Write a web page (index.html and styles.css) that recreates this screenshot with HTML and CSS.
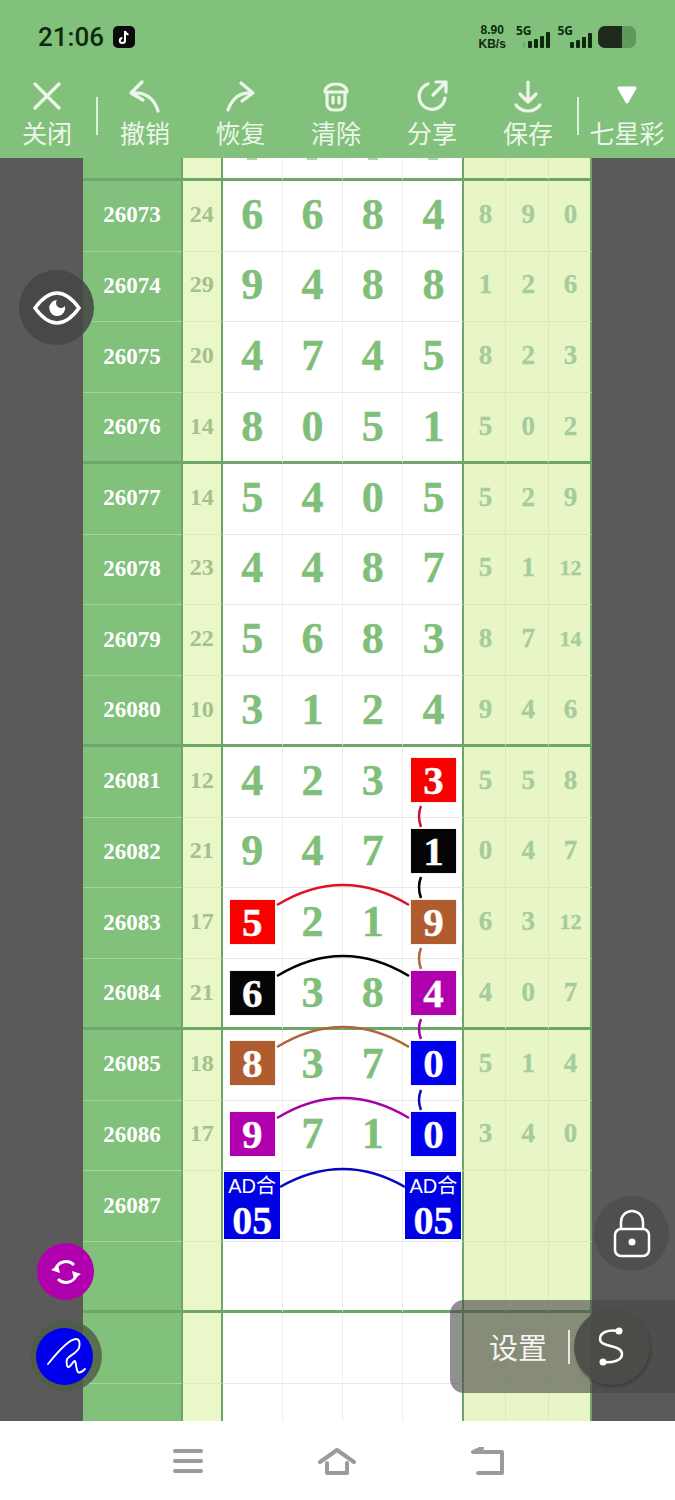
FILE: index.html
```html
<!DOCTYPE html>
<html lang="zh">
<head>
    <meta charset="UTF-8">
    <meta name="viewport" content="width=device-width, initial-scale=1.0">
    <title>七星彩</title>
    <link rel="stylesheet" href="styles.css">
</head>
<body>
<div class="phone">
    <header class="top">
        <div class="status">
            <span class="time">21:06</span>
            <svg class="tiktok" width="22" height="24" viewBox="0 0 22 24"><rect x="0" y="1" width="22" height="22" rx="5" fill="#0a0a0a"/><path d="M12 6v9.500a2.600 2.600 0 1 1-2.600-2.600M12 6c.3 2 1.500 3.200 3.500 3.500" fill="none" stroke="#fff" stroke-width="2"/></svg>
            <span class="speed">8.90<br>KB/s</span>
            <span class="sig sig-one">5G
                <svg width="28" height="18" viewBox="0 0 28 18"><rect x="0" y="11" width="2" height="6" fill="#7aa873"/><rect x="5" y="10" width="4" height="7" rx="1"/><rect x="11" y="8" width="4" height="9" rx="1"/><rect x="17" y="5" width="4" height="12" rx="1"/><rect x="23" y="1" width="4" height="16" rx="1"/></svg>
            </span>
            <span class="sig sig-two">5G
                <svg width="24" height="18" viewBox="0 0 24 18"><rect x="0" y="11" width="4" height="6" rx="1"/><rect x="6" y="9" width="4" height="8" rx="1"/><rect x="12" y="6" width="4" height="11" rx="1"/><rect x="18" y="2" width="4" height="15" rx="1"/></svg>
            </span>
            <svg class="battery" width="40" height="24" viewBox="0 0 40 24"><rect x="0" y="1" width="38" height="22" rx="7" fill="#5f9a5a"/><path d="M7 1h17v22H7a7 7 0 0 1-7-7V8a7 7 0 0 1 7-7z" fill="#1d2a1d"/></svg>
        </div>
        <nav class="tools">
            <div class="tool">
                <svg width="36" height="36" viewBox="0 0 36 36"><path d="M6 6l24 24M30 6L6 30"/></svg>
                <span>关闭</span>
            </div>
            <i class="tool-sep"></i>
            <div class="tool">
                <svg width="36" height="36" viewBox="0 0 36 36"><path d="M15 4L4 15l12 7M5 15c13-1 22 5 26 18"/></svg>
                <span>撤销</span>
            </div>
            <div class="tool">
                <svg width="36" height="36" viewBox="0 0 36 36"><path d="M18 5l12 10-11 8M29 15C17 14 9 21 5 32"/></svg>
                <span>恢复</span>
            </div>
            <div class="tool">
                <svg width="36" height="36" viewBox="0 0 36 36"><path d="M9 14h18v12a6 6 0 0 1-6 6h-6a6 6 0 0 1-6-6zM7 14c0-5 5-8 11-8s11 3 11 8M15 19v6M21 19v6"/></svg>
                <span>清除</span>
            </div>
            <div class="tool">
                <svg width="36" height="36" viewBox="0 0 36 36"><path d="M14 6a13 13 0 1 0 17 14M22 4h10v10M32 4L19 17"/></svg>
                <span>分享</span>
            </div>
            <div class="tool">
                <svg width="36" height="36" viewBox="0 0 36 36"><path d="M18 4v20M10 16l8 8 8-8M6 27c3 4 7 6 12 6s9-2 12-6"/></svg>
                <span>保存</span>
            </div>
            <i class="tool-sep"></i>
            <div class="tool">
                <svg width="36" height="36" viewBox="0 0 36 36"><path class="solid" d="M10 10h16l-8 14z"/></svg>
                <span>七星彩</span>
            </div>
        </nav>
    </header>

    <main class="board">
        <div class="sheet">
            <div class="row cut end"><b></b><em></em><u></u><u></u><u></u><u></u><s></s><s></s><s></s></div>

            <div class="row"><b>26073</b><em>24</em><u>6</u><u>6</u><u>8</u><u>4</u><s>8</s><s>9</s><s>0</s></div>
            <div class="row"><b>26074</b><em>29</em><u>9</u><u>4</u><u>8</u><u>8</u><s>1</s><s>2</s><s>6</s></div>
            <div class="row"><b>26075</b><em>20</em><u>4</u><u>7</u><u>4</u><u>5</u><s>8</s><s>2</s><s>3</s></div>
            <div class="row end"><b>26076</b><em>14</em><u>8</u><u>0</u><u>5</u><u>1</u><s>5</s><s>0</s><s>2</s></div>

            <div class="row"><b>26077</b><em>14</em><u>5</u><u>4</u><u>0</u><u>5</u><s>5</s><s>2</s><s>9</s></div>
            <div class="row"><b>26078</b><em>23</em><u>4</u><u>4</u><u>8</u><u>7</u><s>5</s><s>1</s><s class="small">12</s></div>
            <div class="row"><b>26079</b><em>22</em><u>5</u><u>6</u><u>8</u><u>3</u><s>8</s><s>7</s><s class="small">14</s></div>
            <div class="row end"><b>26080</b><em>10</em><u>3</u><u>1</u><u>2</u><u>4</u><s>9</s><s>4</s><s>6</s></div>

            <div class="row"><b>26081</b><em>12</em><u>4</u><u>2</u><u>3</u><u><span class="chip red">3</span></u><s>5</s><s>5</s><s>8</s></div>
            <div class="row"><b>26082</b><em>21</em><u>9</u><u>4</u><u>7</u><u><span class="chip black">1</span></u><s>0</s><s>4</s><s>7</s></div>
            <div class="row"><b>26083</b><em>17</em><u><span class="chip red">5</span></u><u>2</u><u>1</u><u><span class="chip brown">9</span></u><s>6</s><s>3</s><s class="small">12</s></div>
            <div class="row end"><b>26084</b><em>21</em><u><span class="chip black">6</span></u><u>3</u><u>8</u><u><span class="chip purple">4</span></u><s>4</s><s>0</s><s>7</s></div>

            <div class="row"><b>26085</b><em>18</em><u><span class="chip brown">8</span></u><u>3</u><u>7</u><u><span class="chip blue">0</span></u><s>5</s><s>1</s><s>4</s></div>
            <div class="row"><b>26086</b><em>17</em><u><span class="chip purple">9</span></u><u>7</u><u>1</u><u><span class="chip blue">0</span></u><s>3</s><s>4</s><s>0</s></div>
            <div class="row"><b>26087</b><em></em><u><span class="total">AD合<strong>05</strong></span></u><u></u><u></u><u><span class="total">AD合<strong>05</strong></span></u><s></s><s></s><s></s></div>
            <div class="row end"><b></b><em></em><u></u><u></u><u></u><u></u><s></s><s></s><s></s></div>

            <div class="row"><b></b><em></em><u></u><u></u><u></u><u></u><s></s><s></s><s></s></div>
            <div class="row"><b></b><em></em><u></u><u></u><u></u><u></u><s></s><s></s><s></s></div>
        </div>

        <!-- links between matching numbers, coordinates are board pixels -->
        <svg class="links" width="675" height="1263" viewBox="0 0 675 1263">
            <path d="M277 747Q343 707 409 747" stroke="#e0102a"/>
            <path d="M277 818Q343 778 409 818" stroke="#000"/>
            <path d="M277 889Q343 849 409 889" stroke="#b0653a"/>
            <path d="M277 960Q343 920 409 960" stroke="#a800a8"/>
            <path d="M280 1029Q343 993 405 1029" stroke="#0808c0"/>
            <path d="M421 648Q417 658 421 669" stroke="#d0103a"/>
            <path d="M421 719Q417 729 421 740" stroke="#000"/>
            <path d="M421 790Q417 800 421 811" stroke="#b0653a"/>
            <path d="M421 861Q417 871 421 881" stroke="#a800a8"/>
            <path d="M421 932Q417 942 421 952" stroke="#0808c0"/>
        </svg>

        <button class="float eye">
            <svg width="48" height="36" viewBox="0 0 48 36"><path d="M2 18C10 7 17 3 24 3s14 4 22 15c-8 11-15 15-22 15S10 29 2 18z" fill="none" stroke="#fff" stroke-width="3.500"/><path d="M24 10a8 8 0 1 0 8 6 4 4 0 0 1-8-6z" fill="#fff"/></svg>
        </button>
        <button class="float lock">
            <svg width="38" height="50" viewBox="0 0 38 50"><path d="M8 20V13a11 11 0 0 1 22 0v7" fill="none" stroke="#fff" stroke-width="2.500"/><rect x="2" y="20" width="34" height="27" rx="6" fill="none" stroke="#fff" stroke-width="2.500"/><circle cx="19" cy="33" r="3.500" fill="#fff"/></svg>
        </button>
        <button class="float sync">
            <svg width="34" height="34" viewBox="0 0 34 34"><path d="M7 13a11 11 0 0 1 18-3M27 21a11 11 0 0 1-18 3" fill="none" stroke="#fff" stroke-width="3"/><path d="M2 15l7-5 2 8zM32 19l-7 5-2-8z" fill="#fff"/></svg>
        </button>
        <div class="pen-ring">
            <span class="pen">
                <svg width="44" height="44" viewBox="0 0 44 44"><path d="M5 30C13 20 26 5 33 5c4 0 4 5 3 9-2 5-9 7-12 11-1 4 0 9 2 8 2-1 4-6 6-6 1 0 1 9 3 11 1 1 4 0 7-3" fill="none" stroke="#fff" stroke-width="1.900" stroke-linecap="round" stroke-linejoin="round"/></svg>
            </span>
        </div>
        <div class="settings">
            <span class="settings-text">设置</span>
            <i class="settings-sep"></i>
            <span class="s-btn">
                <svg width="40" height="42" viewBox="0 0 40 42"><path d="M27 5C15 3 8 7 8 13c0 9 22 5 22 15 0 7-10 9-19 8" fill="none" stroke="#fff" stroke-width="2.500"/><circle cx="27" cy="5" r="3.500" fill="#fff"/><circle cx="11" cy="36" r="3.500" fill="#fff"/></svg>
            </span>
        </div>
    </main>

    <footer class="nav">
        <svg width="32" height="26" viewBox="0 0 32 26"><path d="M3 3h26M3 13h26M3 23h26"/></svg>
        <svg width="38" height="28" viewBox="0 0 38 28"><path d="M2 15L19 3l17 12M9 16v10h20V16"/></svg>
        <svg width="34" height="28" viewBox="0 0 34 28"><path d="M12 1L3 5h29v21H8"/></svg>
    </footer>
</div>
</body>
</html>
```

FILE: styles.css
```css
*{box-sizing: border-box;}
body{margin: 0; background: #fff; font-family: "Noto Sans CJK SC", "Noto Sans", sans-serif;}
.phone{width: 675px; height: 1500px; display: flex; flex-direction: column; overflow: hidden;}

/* status bar and toolbar */
.top{height: 158px; background: #82c17b; flex-shrink: 0;}
.status{height: 74px; display: flex; align-items: center; padding: 0 37px 0 38px;}
.time{font-family: Roboto, sans-serif; font-size: 26px; font-weight: 500; color: #0d2a0f; width: 75px;}
.tiktok{margin-right: auto;}
.speed{font-family: "Liberation Sans", sans-serif; font-size: 12px; line-height: 14px; font-weight: 700; color: #0d2a0f; text-align: center; margin-right: 10px;}
.sig{display: flex; align-items: flex-start; font-family: "Noto Sans", sans-serif; font-size: 12px; line-height: 12px; font-weight: 700; color: #0d2a0f; height: 24px;}
.sig svg{fill: #0d2a0f; margin-top: 6px;}
.sig-one{margin-right: 6px;}
.sig-one svg{margin-left: -8px;}
.sig-two{margin-right: 4px;}
.sig-two svg{margin-left: -3px;}

.tools{display: grid; grid-template-columns: 94px 3px 96px 95px 96px 96px 96px 3px 96px; height: 84px;}
.tool{display: flex; flex-direction: column; align-items: center; color: #edf6ea; font-size: 25px; line-height: 34px;}
.tool svg{fill: none; stroke: #edf6ea; stroke-width: 3.200; stroke-linecap: round; stroke-linejoin: round; margin-top: 4px; flex-shrink: 0;}
.tool svg .solid{fill: #fff; stroke: #fff; stroke-width: 3;}
.tool span{margin-top: 1px; white-space: nowrap;}
.tool-sep{width: 2px; height: 38px; background: #dcefd8; margin: 23px 0 0 2px;}
.tool-sep:nth-child(8){margin-left: 1px;}

/* the sheet of draws */
.board{flex: 1; position: relative; background: #5a5a5a; overflow: hidden;}
.sheet{width: 509px; margin-left: 83px;}
.row{display: grid; grid-template-columns: 100px 39.500px repeat(4, 60.250px) repeat(3, 42.830px); grid-template-rows: 100%; height: 70.750px; font-family: "Liberation Serif", serif; font-weight: 700;}
.row > *{display: flex; align-items: center; justify-content: center; text-decoration: none; font-style: normal; padding-bottom: 3px; border-bottom: 1px solid #e8e8e8;}
.row b{background: #82c17b; color: #fff; font-size: 23px; padding-bottom: 1px; border-bottom-color: #a6d6a0; border-right: 2px solid #6ea568;}
.row em{background: #eaf7c8; color: #a3c08d; font-size: 24px; border-right: 2px solid #6ea568; border-bottom-color: #dcebb4;}
.row u{background: #fff; color: #7fbf79; font-size: 44px; -webkit-text-stroke: .4px #7fbf79; border-right: 1px solid #eeeeee;}
.row u:nth-child(6){border-right: 2px solid #6ea568; padding-left: 2px;}
.row s{background: #e8f6c6; color: #a6cc9b; font-size: 27px; -webkit-text-stroke: .3px #a6cc9b; border-right: 1px solid #d9eab6; border-bottom-color: #d9eab6; padding-left: 2px;}
.row s:last-child{border-right: 2px solid #74a56c;}
.row s.small{font-size: 22px;}
.row.end > *{border-bottom: 3px solid #6ea568; padding-bottom: 0;}

/* only the bottoms of the row above are still on screen */
.row.cut{height: 22.750px;}
.row.cut u{align-items: flex-start;}
.row.cut u::before{content: ""; width: 10px; height: 2px; background: #a9d6a3;}

.chip{width: 45px; height: 44px; display: flex; align-items: center; justify-content: center; color: #fff; -webkit-text-stroke: .4px #fff; font-size: 41px; line-height: 44px; box-shadow: 0 0 0 1px #f2f2f2;}
.red{background: #f80000;}
.black{background: #050505;}
.brown{background: #b05c2e;}
.purple{background: #b000ae;}
.blue{background: #0000ee;}
.total{width: 56px; height: 67px; background: #0000e4; color: #fff; -webkit-text-stroke: 0; display: flex; flex-direction: column; align-items: center; font-family: "Liberation Sans", "Noto Sans CJK SC", sans-serif; font-weight: 400; font-size: 20px; line-height: 28px; margin-top: 2px;}
.total strong{font-family: "Liberation Serif", serif; font-size: 40px; line-height: 42px; -webkit-text-stroke: .3px #fff;}

.links{position: absolute; left: 0; top: 0; pointer-events: none;}
.links path{fill: none; stroke-width: 2.500;}

/* floating buttons */
.float{position: absolute; border: 0; padding: 0; border-radius: 50%; display: flex; align-items: center; justify-content: center;}
.eye{left: 19px; top: 112px; width: 75px; height: 75px; background: rgba(70, 70, 70, .88);}
.lock{left: 594px; top: 1038px; width: 75px; height: 75px; background: rgba(78, 78, 78, .9);}
.sync{left: 37px; top: 1085px; width: 57px; height: 57px; background: #b000ae;}
.pen-ring{position: absolute; left: 30px; top: 1162px; width: 72px; height: 72px; padding-right: 3px; border-radius: 50%; background: rgba(80, 90, 70, .82); display: flex; align-items: center; justify-content: center;}
.pen{width: 57px; height: 57px; border-radius: 50%; background: #0000ee; display: flex; align-items: center; justify-content: center;}
.settings{position: absolute; left: 450px; top: 1142px; width: 225px; height: 93px; border-radius: 14px 0 0 14px; background: rgba(70, 70, 70, .6); display: flex; align-items: center; padding-left: 39px;}
.settings-text{color: #f4f4f0; font-size: 29px; line-height: 1;}
.settings-sep{width: 2px; height: 34px; background: #e8e8e2; margin-left: 21px;}
.s-btn{position: absolute; left: 124px; top: 9px; width: 76px; height: 76px; border-radius: 50%; background: rgba(75, 75, 72, .92); box-shadow: 1px 2px 3px rgba(40, 40, 40, .5); display: flex; align-items: center; justify-content: center;}

/* system navigation */
.nav{height: 79px; background: #fff; flex-shrink: 0; display: flex; align-items: center; justify-content: center;}
.nav svg{fill: none; stroke: #9b9b9b; stroke-width: 4; stroke-linecap: round; stroke-linejoin: round; margin: 0 57px;}
```
